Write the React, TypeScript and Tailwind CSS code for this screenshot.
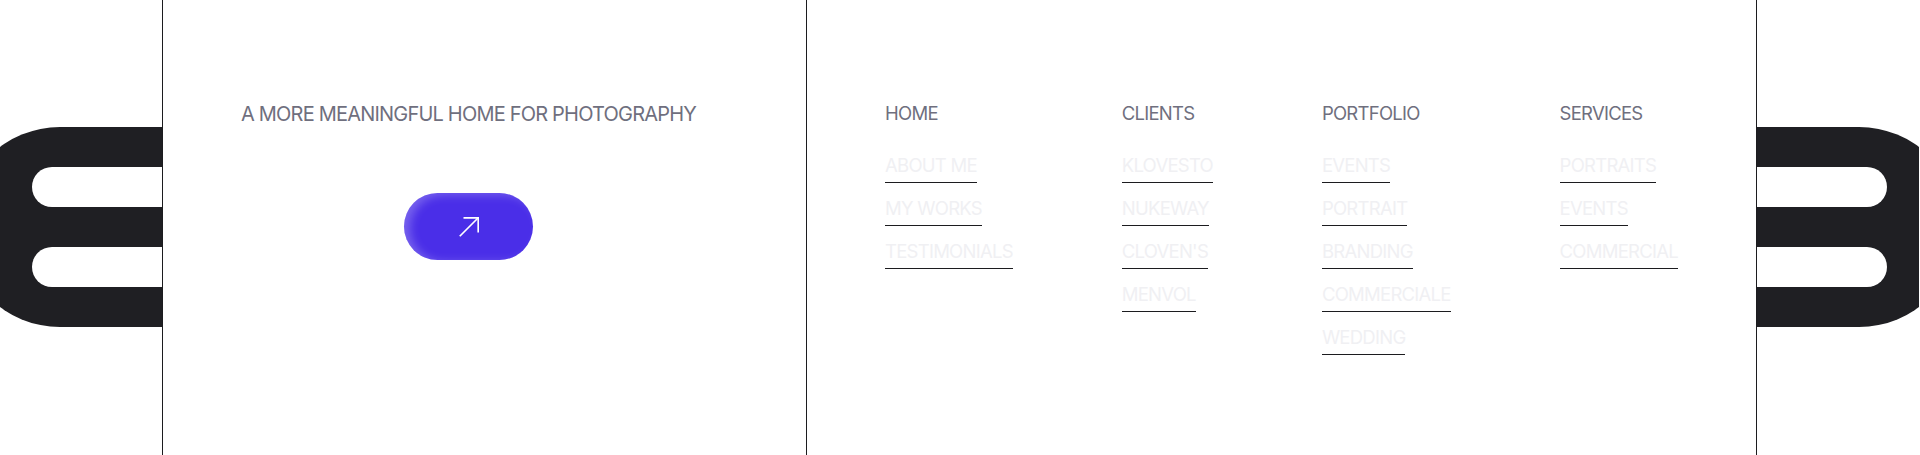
import React from "react";

const NAV = [
  { title: "HOME", items: ["ABOUT ME", "MY WORKS", "TESTIMONIALS"] },
  { title: "CLIENTS", items: ["KLOVESTO", "NUKEWAY", "CLOVEN'S", "MENVOL"] },
  { title: "PORTFOLIO", items: ["EVENTS", "PORTRAIT", "BRANDING", "COMMERCIALE", "WEDDING"] },
  { title: "SERVICES", items: ["PORTRAITS", "EVENTS", "COMMERCIAL"] },
];

function Decor({ side }: { side: "left" | "right" }) {
  const left = side === "left";
  return (
    <div className={`flex w-[162px] shrink-0 overflow-hidden pt-[127px] ${left ? "justify-end" : "justify-start"}`}>
      <div
        className={`flex h-[200px] w-[202px] shrink-0 flex-col gap-10 bg-[#1f1f23] py-10 ${
          left ? "rounded-l-[100px] pl-[72px]" : "rounded-r-[100px] pr-[72px]"
        }`}
      >
        <div className={`h-10 bg-white ${left ? "rounded-l-full" : "rounded-r-full"}`} />
        <div className={`h-10 bg-white ${left ? "rounded-l-full" : "rounded-r-full"}`} />
      </div>
    </div>
  );
}

export default function App() {
  return (
    <div className="flex h-[455px] w-full overflow-hidden bg-white font-['Inter',sans-serif]">
      <Decor side="left" />

      {/* intro */}
      <div className="w-[644px] shrink-0 border-l border-[#1c1c1f] pl-[78px] pt-[100px]">
        <div className="inline-flex flex-col items-center">
          <p className="text-[20px] leading-7 tracking-[-0.04em] text-[#6f6f7e]">
            A MORE MEANINGFUL HOME FOR PHOTOGRAPHY
          </p>
          <button className="mt-[65px] flex h-[67px] w-[129px] items-center justify-center rounded-full bg-[#4a2ee8] shadow-[inset_6px_2px_10px_rgba(255,255,255,0.25)]">
            <svg width="20" height="20" viewBox="0 0 20 20" fill="none" stroke="white" strokeWidth="1.75">
              <path d="M0.75 19.25 19.25 0.75" />
              <path d="M4.5 0.75h14.75v14.75" />
            </svg>
          </button>
        </div>
      </div>

      {/* nav */}
      <div className="flex w-[951px] shrink-0 justify-between border-x border-[#1c1c1f] pl-[78px] pr-[78px] pt-[99px]">
        {NAV.map((col) => (
          <div key={col.title} className="flex flex-col items-start">
            <h3 className="text-[18.5px] leading-7 tracking-[-0.04em] text-[#6f6f7e]">{col.title}</h3>
            <ul className="mt-[24px] flex flex-col items-start gap-[11px]">
              {col.items.map((item) => (
                <li key={item}>
                  <a className="block border-b border-[#1c1c1f] pb-[3px] text-[18.5px] leading-7 tracking-[-0.04em] text-[#f0f0f3]">
                    {item}
                  </a>
                </li>
              ))}
            </ul>
          </div>
        ))}
      </div>

      <Decor side="right" />
    </div>
  );
}
